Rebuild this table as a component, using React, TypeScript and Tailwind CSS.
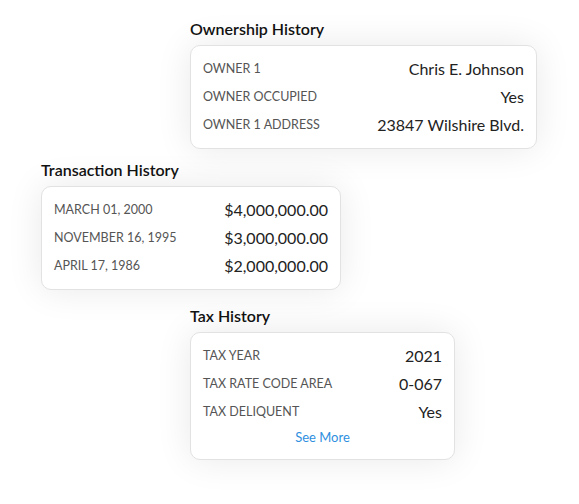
import React from "react";

type Row = { label: string; value: string };

const ownership: Row[] = [
  { label: "OWNER 1", value: "Chris E. Johnson" },
  { label: "OWNER OCCUPIED", value: "Yes" },
  { label: "OWNER 1 ADDRESS", value: "23847 Wilshire Blvd." },
];

const transactions: Row[] = [
  { label: "MARCH 01, 2000", value: "$4,000,000.00" },
  { label: "NOVEMBER 16, 1995", value: "$3,000,000.00" },
  { label: "APRIL 17, 1986", value: "$2,000,000.00" },
];

const taxes: Row[] = [
  { label: "TAX YEAR", value: "2021" },
  { label: "TAX RATE CODE AREA", value: "0-067" },
  { label: "TAX DELIQUENT", value: "Yes" },
];

const Section = ({
  title,
  rows,
  className,
  more,
}: {
  title: string;
  rows: Row[];
  className: string;
  more?: boolean;
}) => (
  <section className={className}>
    <h2 className="h-5 text-[16px] leading-5 font-semibold text-[#111] mb-[6px]">{title}</h2>
    <div className="rounded-[10px] border border-[#e2e2e2] bg-white px-3 py-[9px] shadow-[0_0_36px_rgba(0,0,0,0.09)]">
      {rows.map((r) => (
        <div key={r.label} className="flex h-7 items-center justify-between">
          <span className="text-[12.5px] text-[#555]">{r.label}</span>
          <span className="text-[16px] text-[#222]">{r.value}</span>
        </div>
      ))}
      {more && (
        <div className="flex h-6 items-center justify-center text-[13px] text-[#2f8fe0]">
          See More
        </div>
      )}
    </div>
  </section>
);

export default function App() {
  return (
    <div className="min-h-screen bg-white pt-[19px] font-['Lato',sans-serif]">
      <Section title="Ownership History" rows={ownership} className="ml-[190px] w-[347px]" />
      <Section title="Transaction History" rows={transactions} className="ml-[41px] mt-[11px] w-[300px]" />
      <Section title="Tax History" rows={taxes} className="ml-[190px] mt-4 w-[265px]" more />
    </div>
  );
}
